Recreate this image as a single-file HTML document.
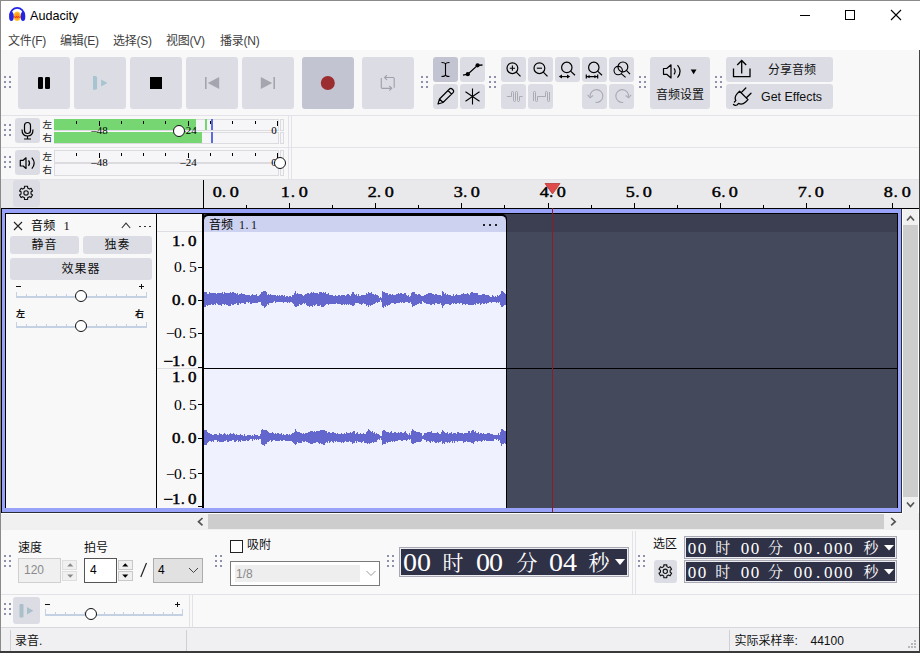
<!DOCTYPE html>
<html><head><meta charset="utf-8"><title>Audacity</title>
<style>
html,body{margin:0;padding:0;background:#fff}
#w{position:relative;width:920px;height:653px;overflow:hidden;background:#fff}
#w>div,#w>svg{position:absolute;display:block}
</style></head><body><div id="w">
<div style="left:0px;top:0px;width:920px;height:50px;background:#fff;"></div>
<svg style="left:0px;top:0px" width="30" height="30" viewBox="0 0 30 30"><defs><radialGradient id="lg" cx="50%" cy="50%" r="55%"><stop offset="0" stop-color="#ff8a1a"/><stop offset="0.55" stop-color="#ffa21f"/><stop offset="1" stop-color="#ffe14a"/></radialGradient></defs>
<ellipse cx="17.15" cy="16.3" rx="3.9" ry="4.8" fill="url(#lg)"/>
<path d="M13.3 16.9 L14.6 16.2 L15.6 17 L16.6 15.9 L17.6 17 L18.6 16 L19.6 16.9 L21 16.5 L21 17.3 L19.6 17.7 L18.6 17.1 L17.6 18 L16.6 17.2 L15.6 17.9 L14.6 17.2 L13.3 17.6 Z" fill="#e8241a"/>
<path d="M10.4 15.5 V14.6 A6.8 6.8 0 0 1 24 14.6 V15.5" fill="none" stroke="#2424e6" stroke-width="1.7"/>
<ellipse cx="11.4" cy="16.4" rx="2.3" ry="4.6" fill="#2424e6"/>
<ellipse cx="23" cy="16.4" rx="2.3" ry="4.6" fill="#2424e6"/></svg>
<div style="left:30px;top:10px;font:12.6px/1 'Liberation Sans','Noto Sans CJK SC',sans-serif;color:#000;white-space:pre;">Audacity</div>
<svg style="left:795px;top:5px" width="115" height="20" viewBox="0 0 115 20">
<path d="M5 10.5 H15" stroke="#000" stroke-width="1" fill="none"/>
<rect x="50.5" y="5.5" width="9" height="9" stroke="#000" stroke-width="1" fill="none"/>
<path d="M96 5 L106 15 M106 5 L96 15" stroke="#000" stroke-width="1.1" fill="none"/>
</svg>
<div style="left:8px;top:35.4px;font:12px/1 'Liberation Sans','Noto Sans CJK SC',sans-serif;color:#404040;white-space:pre;letter-spacing:-0.25px">文件(F)</div>
<div style="left:60px;top:35.4px;font:12px/1 'Liberation Sans','Noto Sans CJK SC',sans-serif;color:#404040;white-space:pre;letter-spacing:-0.25px">编辑(E)</div>
<div style="left:113px;top:35.4px;font:12px/1 'Liberation Sans','Noto Sans CJK SC',sans-serif;color:#404040;white-space:pre;letter-spacing:-0.25px">选择(S)</div>
<div style="left:166px;top:35.4px;font:12px/1 'Liberation Sans','Noto Sans CJK SC',sans-serif;color:#404040;white-space:pre;letter-spacing:-0.25px">视图(V)</div>
<div style="left:220px;top:35.4px;font:12px/1 'Liberation Sans','Noto Sans CJK SC',sans-serif;color:#404040;white-space:pre;letter-spacing:-0.25px">播录(N)</div>
<div style="left:0px;top:49.5px;width:920px;height:131px;background:#f8f8f9;"></div>
<div style="left:0px;top:115px;width:920px;height:1px;background:#e2e2e8;"></div>
<svg style="left:4px;top:76px" width="7" height="12"><rect x="0" y="0" width="2" height="2" fill="#8e90ac"/><rect x="0" y="5" width="2" height="2" fill="#8e90ac"/><rect x="0" y="10" width="2" height="2" fill="#8e90ac"/><rect x="5" y="0" width="2" height="2" fill="#8e90ac"/><rect x="5" y="5" width="2" height="2" fill="#8e90ac"/><rect x="5" y="10" width="2" height="2" fill="#8e90ac"/></svg>
<div style="left:18px;top:57px;width:52px;height:52px;background:#dcdde4;border-radius:3px"></div>
<div style="left:74px;top:57px;width:52px;height:52px;background:#dcdde4;border-radius:3px"></div>
<div style="left:130px;top:57px;width:52px;height:52px;background:#dcdde4;border-radius:3px"></div>
<div style="left:186px;top:57px;width:52px;height:52px;background:#dcdde4;border-radius:3px"></div>
<div style="left:242px;top:57px;width:52px;height:52px;background:#dcdde4;border-radius:3px"></div>
<div style="left:362px;top:57px;width:52px;height:52px;background:#dcdde4;border-radius:3px"></div>
<div style="left:302px;top:57px;width:52px;height:52px;background:#c3c4d1;border-radius:3px"></div>
<svg style="left:18px;top:57px" width="52" height="52" viewBox="0 0 52 52"><rect x="20" y="20" width="5" height="12" rx="1.2" fill="#000"/><rect x="27" y="20" width="5" height="12" rx="1.2" fill="#000"/></svg>
<svg style="left:74px;top:57px" width="52" height="52" viewBox="0 0 52 52"><path d="M19 19 H21.5 L23.1 19.9 V31.9 L21.5 32.8 H19 Z" fill="#a8c4d0"/><path d="M27.1 22.4 L33.4 26 L27.1 29.6 Z" fill="#a8c4d0"/></svg>
<svg style="left:130px;top:57px" width="52" height="52" viewBox="0 0 52 52"><rect x="20" y="20" width="12" height="12" fill="#000"/></svg>
<svg style="left:186px;top:57px" width="52" height="52" viewBox="0 0 52 52"><rect x="19" y="20" width="1.6" height="12" fill="#a4a5ae"/><path d="M33.2 20 V32 L21.8 26 Z" fill="#a4a5ae"/></svg>
<svg style="left:242px;top:57px" width="52" height="52" viewBox="0 0 52 52"><rect x="31.4" y="20" width="1.6" height="12" fill="#a4a5ae"/><path d="M18.8 20 V32 L30.2 26 Z" fill="#a4a5ae"/></svg>
<svg style="left:302px;top:57px" width="52" height="52" viewBox="0 0 52 52"><circle cx="25.8" cy="26" r="7" fill="#9b2d30"/></svg>
<svg style="left:362px;top:57px" width="52" height="52" viewBox="0 0 52 52"><g fill="none" stroke="#9fa1ad" stroke-width="1.15">
<path d="M32.2 30.7 V21.5 Q32.2 20.5 31.2 20.5 H22.8"/><path d="M24.9 18.2 L22.6 20.5 L24.9 22.8"/>
<path d="M19.3 21.1 V30.3 Q19.3 31.3 20.3 31.3 H29.5"/><path d="M27.3 29 L29.7 31.3 L27.3 33.6"/>
</g></svg>
<svg style="left:421px;top:76px" width="7" height="12"><rect x="0" y="0" width="2" height="2" fill="#8e90ac"/><rect x="0" y="5" width="2" height="2" fill="#8e90ac"/><rect x="0" y="10" width="2" height="2" fill="#8e90ac"/><rect x="5" y="0" width="2" height="2" fill="#8e90ac"/><rect x="5" y="5" width="2" height="2" fill="#8e90ac"/><rect x="5" y="10" width="2" height="2" fill="#8e90ac"/></svg>
<div style="left:433px;top:57px;width:25px;height:25px;background:#c3c4d1;border-radius:3px"></div>
<div style="left:460px;top:57px;width:25px;height:25px;background:#dcdde4;border-radius:3px"></div>
<div style="left:433px;top:84px;width:25px;height:25px;background:#dcdde4;border-radius:3px"></div>
<div style="left:460px;top:84px;width:25px;height:25px;background:#dcdde4;border-radius:3px"></div>
<svg style="left:433px;top:57px" width="25" height="25" viewBox="0 0 25 25"><path d="M8.5 5.5 C10.5 5.5 12.5 6 12.5 7.5 V17.5 C12.5 19 10.5 19.5 8.5 19.5 M16.5 5.5 C14.5 5.5 12.5 6 12.5 7.5 M12.5 17.5 C12.5 19 14.5 19.5 16.5 19.5" fill="none" stroke="#000" stroke-width="1.1"/></svg>
<svg style="left:460px;top:57px" width="25" height="25" viewBox="0 0 25 25"><path d="M3 18.2 L7.8 17.2 L17.6 8.3 L22.5 8" fill="none" stroke="#000" stroke-width="1.3"/><circle cx="7.8" cy="17.2" r="2.1" fill="#000"/><circle cx="17.6" cy="8.3" r="2.1" fill="#000"/></svg>
<svg style="left:433px;top:84px" width="25" height="25" viewBox="0 0 25 25"><path d="M5 20 L6.5 15 L16.5 5 a1.8 1.8 0 0 1 2.6 0 l1 1 a1.8 1.8 0 0 1 0 2.6 L10 18.5 Z M15 6.5 L18.6 10.1 M6.5 15 L10 18.5" fill="none" stroke="#000" stroke-width="1.2" stroke-linejoin="round"/></svg>
<svg style="left:460px;top:84px" width="25" height="25" viewBox="0 0 25 25"><path d="M12.5 4.5 V20.5 M5.5 7.8 L19.5 17.2 M19.5 7.8 L5.5 17.2" stroke="#000" stroke-width="1.1" fill="none"/></svg>
<svg style="left:489px;top:76px" width="7" height="12"><rect x="0" y="0" width="2" height="2" fill="#8e90ac"/><rect x="0" y="5" width="2" height="2" fill="#8e90ac"/><rect x="0" y="10" width="2" height="2" fill="#8e90ac"/><rect x="5" y="0" width="2" height="2" fill="#8e90ac"/><rect x="5" y="5" width="2" height="2" fill="#8e90ac"/><rect x="5" y="10" width="2" height="2" fill="#8e90ac"/></svg>
<div style="left:501px;top:57px;width:25px;height:25px;background:#dcdde4;border-radius:3px"></div>
<div style="left:528px;top:57px;width:25px;height:25px;background:#dcdde4;border-radius:3px"></div>
<div style="left:555px;top:57px;width:25px;height:25px;background:#dcdde4;border-radius:3px"></div>
<div style="left:582px;top:57px;width:25px;height:25px;background:#dcdde4;border-radius:3px"></div>
<div style="left:609px;top:57px;width:25px;height:25px;background:#dcdde4;border-radius:3px"></div>
<div style="left:501px;top:84px;width:25px;height:25px;background:#dcdde4;border-radius:3px"></div>
<div style="left:528px;top:84px;width:25px;height:25px;background:#dcdde4;border-radius:3px"></div>
<div style="left:582px;top:84px;width:25px;height:25px;background:#dcdde4;border-radius:3px"></div>
<div style="left:609px;top:84px;width:25px;height:25px;background:#dcdde4;border-radius:3px"></div>
<svg style="left:501px;top:57px" width="25" height="25" viewBox="0 0 25 25"><circle cx="11.4" cy="11.2" r="5.4" fill="none" stroke="#000" stroke-width="1.2"/><path d="M15.3 15.1 L19.5 19.4" stroke="#000" stroke-width="1.2"/><path d="M8.8 11.2 H14 M11.4 8.6 V13.8" stroke="#000" stroke-width="1.1"/></svg>
<svg style="left:528px;top:57px" width="25" height="25" viewBox="0 0 25 25"><circle cx="11.4" cy="11.2" r="5.4" fill="none" stroke="#000" stroke-width="1.2"/><path d="M15.3 15.1 L19.5 19.4" stroke="#000" stroke-width="1.2"/><path d="M8.8 11.2 H14" stroke="#000" stroke-width="1.1"/></svg>
<svg style="left:555px;top:57px" width="25" height="25" viewBox="0 0 25 25"><circle cx="11.8" cy="10.4" r="5.2" fill="none" stroke="#000" stroke-width="1.2"/><path d="M15.6 14.1 L20 18.3" stroke="#000" stroke-width="1.2"/><path d="M5 19.6 H14" stroke="#000" stroke-width="1.1" fill="none"/><path d="M3.8 19.6 L7 17.6 V21.6 Z M15.2 19.6 L12 17.6 V21.6 Z" fill="#000"/></svg>
<svg style="left:582px;top:57px" width="25" height="25" viewBox="0 0 25 25"><circle cx="11.8" cy="10.4" r="5.2" fill="none" stroke="#000" stroke-width="1.2"/><path d="M15.6 14.1 L20 18.3" stroke="#000" stroke-width="1.2"/><path d="M4.3 19.6 H15.7 M4.3 17.6 V21.6 M15.7 17.6 V21.6" stroke="#000" stroke-width="1.2" fill="none"/><path d="M5 19.6 L7.6 18 V21.2 Z M15 19.6 L12.4 18 V21.2 Z" fill="#000"/></svg>
<svg style="left:609px;top:57px" width="25" height="25" viewBox="0 0 25 25"><circle cx="9.2" cy="13.6" r="4.2" fill="none" stroke="#000" stroke-width="1.1"/><circle cx="13.9" cy="9.9" r="4.9" fill="none" stroke="#000" stroke-width="1.2"/><path d="M17.4 13.4 L21 17.2 M12.2 16.6 L16.6 20.4" stroke="#000" stroke-width="1.2"/></svg>
<svg style="left:501px;top:84px" width="25" height="25" viewBox="0 0 25 25"><path d="M5.9 12.5 H10.5 V8.5 a1 1 0 0 1 2 0 V16.5 a1 1 0 0 0 2 0 V8.5 a1 1 0 0 1 2 0 V16.5 a1 1 0 0 0 2 0 V12.5 H21.6" fill="none" stroke="#a9aab3" stroke-width="1"/></svg>
<svg style="left:528px;top:84px" width="25" height="25" viewBox="0 0 25 25"><path d="M5.5 17 V8.5 a1 1 0 0 1 2 0 V16.5 a1 1 0 0 0 2 0 V12.5 H17.5 V8.5 a1 1 0 0 1 2 0 V16.5 a1 1 0 0 0 2 0 V8" fill="none" stroke="#a9aab3" stroke-width="1"/></svg>
<svg style="left:582px;top:84px" width="25" height="25" viewBox="0 0 25 25"><path d="M8.1 12.8 A6.4 6.4 0 1 1 13.5 18.4" fill="none" stroke="#a9aab3" stroke-width="1.1"/><path d="M5.6 10.8 L8.1 13.8 L11 11.5" fill="none" stroke="#a9aab3" stroke-width="1.1"/></svg>
<svg style="left:609px;top:84px" width="25" height="25" viewBox="0 0 25 25"><path d="M19.6 12.8 A6.4 6.4 0 1 0 14.2 18.4" fill="none" stroke="#a9aab3" stroke-width="1.1"/><path d="M22.1 10.8 L19.6 13.8 L16.7 11.5" fill="none" stroke="#a9aab3" stroke-width="1.1"/></svg>
<svg style="left:639px;top:76px" width="7" height="12"><rect x="0" y="0" width="2" height="2" fill="#8e90ac"/><rect x="0" y="5" width="2" height="2" fill="#8e90ac"/><rect x="0" y="10" width="2" height="2" fill="#8e90ac"/><rect x="5" y="0" width="2" height="2" fill="#8e90ac"/><rect x="5" y="5" width="2" height="2" fill="#8e90ac"/><rect x="5" y="10" width="2" height="2" fill="#8e90ac"/></svg>
<div style="left:650px;top:57px;width:60px;height:52px;background:#dcdde4;border-radius:3px"></div>
<svg style="left:650px;top:57px" width="60" height="30" viewBox="0 0 60 30"><path d="M13.5 11.5 H16.7 L21 7.8 V21 L16.7 17.3 H13.5 Z" fill="none" stroke="#000" stroke-width="1.2" stroke-linejoin="round"/>
<path d="M24 11.4 Q26.3 14.4 24 17.4" fill="none" stroke="#000" stroke-width="1.2"/>
<path d="M27.5 8.2 Q32.8 14.4 27.5 20.6" fill="none" stroke="#000" stroke-width="1.2"/>
<path d="M40.7 12.6 H46.5 L43.6 17.2 Z" fill="#000"/></svg>
<div style="left:656px;top:89px;font:12px/1 'Liberation Sans','Noto Sans CJK SC',sans-serif;color:#111;white-space:pre;">音频设置</div>
<svg style="left:715px;top:76px" width="7" height="12"><rect x="0" y="0" width="2" height="2" fill="#8e90ac"/><rect x="0" y="5" width="2" height="2" fill="#8e90ac"/><rect x="0" y="10" width="2" height="2" fill="#8e90ac"/><rect x="5" y="0" width="2" height="2" fill="#8e90ac"/><rect x="5" y="5" width="2" height="2" fill="#8e90ac"/><rect x="5" y="10" width="2" height="2" fill="#8e90ac"/></svg>
<div style="left:726px;top:57px;width:106.6px;height:25px;background:#dcdde4;border-radius:3px"></div>
<div style="left:726px;top:84px;width:106.6px;height:25px;background:#dcdde4;border-radius:3px"></div>
<svg style="left:726px;top:57px" width="40" height="25" viewBox="0 0 40 25"><path d="M7.5 11.5 V19.6 H24 V11.5 M15.7 16.6 V4 M11.2 8 L15.7 3.5 L20.2 8" fill="none" stroke="#000" stroke-width="1.3"/></svg>
<div style="left:768px;top:64px;font:12px/1 'Liberation Sans','Noto Sans CJK SC',sans-serif;color:#111;white-space:pre;">分享音频</div>
<svg style="left:726px;top:84px" width="40" height="25" viewBox="0 0 40 25"><g fill="none" stroke="#000" stroke-width="1.3" stroke-linejoin="round" stroke-linecap="round">
<path d="M15.2 8.6 L19.8 4 M20.4 13.8 L25 9.2"/>
<path d="M13.6 7.2 L22 15.6 L19.6 18 Q16 21.2 12.6 19.4 L11 21 Q9 22 7.5 20.5 M13.6 7.2 L11.2 9.6 Q8 13.2 9.8 16.6 L8.4 18"/>
</g></svg>
<div style="left:761px;top:91px;font:12.4px/1 'Liberation Sans','Noto Sans CJK SC',sans-serif;color:#111;white-space:pre;">Get Effects</div>
<div style="left:0px;top:147px;width:920px;height:1px;background:#e2e2e8;"></div>
<div style="left:0px;top:179px;width:920px;height:1px;background:#e2e2e8;"></div>
<div style="left:288px;top:116px;width:1px;height:63px;background:#e2e2e8;"></div>
<div style="left:291px;top:116px;width:1px;height:63px;background:#e2e2e8;"></div>
<svg style="left:4px;top:124px" width="7" height="12"><rect x="0" y="0" width="2" height="2" fill="#8e90ac"/><rect x="0" y="5" width="2" height="2" fill="#8e90ac"/><rect x="0" y="10" width="2" height="2" fill="#8e90ac"/><rect x="5" y="0" width="2" height="2" fill="#8e90ac"/><rect x="5" y="5" width="2" height="2" fill="#8e90ac"/><rect x="5" y="10" width="2" height="2" fill="#8e90ac"/></svg>
<svg style="left:4px;top:156px" width="7" height="12"><rect x="0" y="0" width="2" height="2" fill="#8e90ac"/><rect x="0" y="5" width="2" height="2" fill="#8e90ac"/><rect x="0" y="10" width="2" height="2" fill="#8e90ac"/><rect x="5" y="0" width="2" height="2" fill="#8e90ac"/><rect x="5" y="5" width="2" height="2" fill="#8e90ac"/><rect x="5" y="10" width="2" height="2" fill="#8e90ac"/></svg>
<div style="left:15px;top:118px;width:25px;height:25px;background:#dcdde4;border-radius:3px"></div>
<div style="left:15px;top:150px;width:25px;height:25px;background:#dcdde4;border-radius:3px"></div>
<svg style="left:15px;top:118px" width="25" height="25" viewBox="0 0 25 25"><rect x="9.5" y="4.5" width="6" height="11" rx="3" fill="none" stroke="#000" stroke-width="1.2"/>
<path d="M7 11.5 Q7 18 12.5 18 Q18 18 18 11.5 M12.5 18 V21 M9 21 H16" fill="none" stroke="#000" stroke-width="1.2"/></svg>
<svg style="left:15px;top:150px" width="25" height="25" viewBox="0 0 25 25"><path d="M5.3 10.3 H8.2 L11 7.8 V18.5 L8.2 16 H5.3 Z" fill="none" stroke="#000" stroke-width="1.2" stroke-linejoin="round"/>
<path d="M13.5 10.3 Q15.6 13.1 13.5 15.9" fill="none" stroke="#000" stroke-width="1.2"/>
<path d="M16.8 7.6 Q21.6 13.1 16.8 18.6" fill="none" stroke="#000" stroke-width="1.2"/></svg>
<div style="left:42.5px;top:120px;font:9.5px/1 'Liberation Sans','Noto Sans CJK SC',sans-serif;color:#222;white-space:pre;">左</div>
<div style="left:42.5px;top:133px;font:9.5px/1 'Liberation Sans','Noto Sans CJK SC',sans-serif;color:#222;white-space:pre;">右</div>
<div style="left:42.5px;top:152px;font:9.5px/1 'Liberation Sans','Noto Sans CJK SC',sans-serif;color:#222;white-space:pre;">左</div>
<div style="left:42.5px;top:165px;font:9.5px/1 'Liberation Sans','Noto Sans CJK SC',sans-serif;color:#222;white-space:pre;">右</div>
<div style="left:54px;top:119px;width:225px;height:12px;background:#f6f6f8;box-shadow:inset 0 0 0 1px #dcdce0"></div>
<div style="left:280px;top:119px;width:4px;height:12px;background:#f6f6f8;box-shadow:inset 0 0 0 1px #dcdce0"></div>
<div style="left:54px;top:132px;width:225px;height:12px;background:#f6f6f8;box-shadow:inset 0 0 0 1px #dcdce0"></div>
<div style="left:280px;top:132px;width:4px;height:12px;background:#f6f6f8;box-shadow:inset 0 0 0 1px #dcdce0"></div>
<div style="left:54px;top:150px;width:225px;height:12.5px;background:#f6f6f8;box-shadow:inset 0 0 0 1px #dcdce0"></div>
<div style="left:280px;top:150px;width:4px;height:12.5px;background:#f6f6f8;box-shadow:inset 0 0 0 1px #dcdce0"></div>
<div style="left:54px;top:163px;width:225px;height:12.5px;background:#f6f6f8;box-shadow:inset 0 0 0 1px #dcdce0"></div>
<div style="left:280px;top:163px;width:4px;height:12.5px;background:#f6f6f8;box-shadow:inset 0 0 0 1px #dcdce0"></div>
<div style="left:54px;top:119px;width:142px;height:11px;background:#76d672;"></div>
<div style="left:54px;top:132px;width:148px;height:11px;background:#76d672;"></div>
<div style="left:205px;top:119px;width:2px;height:11px;background:#76d672;"></div>
<div style="left:210.5px;top:119px;width:2px;height:11px;background:#5b6be0;"></div>
<div style="left:210.5px;top:132px;width:2px;height:11px;background:#5b6be0;"></div>
<div style="left:76px;top:121px;width:1px;height:2.5px;background:#000;"></div>
<div style="left:99px;top:121px;width:1px;height:5px;background:#000;"></div>
<div style="left:121px;top:121px;width:1px;height:2.5px;background:#000;"></div>
<div style="left:143px;top:121px;width:1px;height:2.5px;background:#000;"></div>
<div style="left:165px;top:121px;width:1px;height:2.5px;background:#000;"></div>
<div style="left:188px;top:121px;width:1px;height:5px;background:#000;"></div>
<div style="left:210px;top:121px;width:1px;height:2.5px;background:#000;"></div>
<div style="left:232px;top:121px;width:1px;height:2.5px;background:#000;"></div>
<div style="left:255px;top:121px;width:1px;height:2.5px;background:#000;"></div>
<div style="left:277px;top:121px;width:1px;height:5px;background:#000;"></div>
<div style="left:79.5px;top:125px;width:40px;text-align:center;font:11px/1 'Liberation Serif','Noto Serif CJK SC',serif;color:#000">–48</div>
<div style="left:168.5px;top:125px;width:40px;text-align:center;font:11px/1 'Liberation Serif','Noto Serif CJK SC',serif;color:#000">–24</div>
<div style="left:254px;top:125px;width:40px;text-align:center;font:11px/1 'Liberation Serif','Noto Serif CJK SC',serif;color:#000">0</div>
<div style="left:76px;top:153px;width:1px;height:2.5px;background:#000;"></div>
<div style="left:99px;top:153px;width:1px;height:5px;background:#000;"></div>
<div style="left:121px;top:153px;width:1px;height:2.5px;background:#000;"></div>
<div style="left:143px;top:153px;width:1px;height:2.5px;background:#000;"></div>
<div style="left:165px;top:153px;width:1px;height:2.5px;background:#000;"></div>
<div style="left:188px;top:153px;width:1px;height:5px;background:#000;"></div>
<div style="left:210px;top:153px;width:1px;height:2.5px;background:#000;"></div>
<div style="left:232px;top:153px;width:1px;height:2.5px;background:#000;"></div>
<div style="left:255px;top:153px;width:1px;height:2.5px;background:#000;"></div>
<div style="left:277px;top:153px;width:1px;height:5px;background:#000;"></div>
<div style="left:79.5px;top:157px;width:40px;text-align:center;font:11px/1 'Liberation Serif','Noto Serif CJK SC',serif;color:#000">–48</div>
<div style="left:168.5px;top:157px;width:40px;text-align:center;font:11px/1 'Liberation Serif','Noto Serif CJK SC',serif;color:#000">–24</div>
<div style="left:254px;top:157px;width:40px;text-align:center;font:11px/1 'Liberation Serif','Noto Serif CJK SC',serif;color:#000">0</div>
<div style="left:172.7px;top:124.80000000000001px;width:12px;height:12px;border-radius:50%;background:#fff;box-sizing:border-box;border:1.3px solid #111"></div>
<div style="left:273.6px;top:156.8px;width:12px;height:12px;border-radius:50%;background:#fff;box-sizing:border-box;border:1.3px solid #111"></div>
<div style="left:0px;top:180px;width:920px;height:28px;background:#e9e9eb;"></div>
<div style="left:13px;top:180px;width:27px;height:27px;background:#dcdde4;border-radius:3px"></div>
<svg style="left:13px;top:180px" width="27" height="27" viewBox="0 0 27 27"><g transform="translate(13.05,12.9)"><g fill="none" stroke="#111" stroke-width="1.15" stroke-linejoin="round"><path d="M-1.58 -4.85 L-1.55 -6.62 L1.55 -6.62 L1.58 -4.85 L3.41 -3.79 L4.96 -4.65 L6.51 -1.97 L4.99 -1.06 L4.99 1.06 L6.51 1.97 L4.96 4.65 L3.41 3.79 L1.58 4.85 L1.55 6.62 L-1.55 6.62 L-1.58 4.85 L-3.41 3.79 L-4.96 4.65 L-6.51 1.97 L-4.99 1.06 L-4.99 -1.06 L-6.51 -1.97 L-4.96 -4.65 L-3.41 -3.79 Z"/><circle cx="0" cy="0" r="2.2"/></g></g></svg>
<div style="left:203px;top:180px;width:1px;height:28px;background:#000;"></div>
<div style="left:203px;top:203px;width:1px;height:5px;background:#000;"></div>
<div style="left:212.60px;top:184px;width:25.80px;height:15.5px;font:15.5px/1 'Liberation Serif','Noto Serif CJK SC',serif;color:#000;-webkit-text-stroke:0.45px #000;"><span style="position:absolute;left:0.00px;top:0;width:8.6px;text-align:center;transform:scaleX(1.17)">0</span><span style="position:absolute;left:9.46px;top:0">.</span><span style="position:absolute;left:17.20px;top:0;width:8.6px;text-align:center;transform:scaleX(1.17)">0</span></div>
<div style="left:246px;top:205px;width:1px;height:3px;background:#000;"></div>
<div style="left:289px;top:203px;width:1px;height:5px;background:#000;"></div>
<div style="left:281.43px;top:184px;width:25.80px;height:15.5px;font:15.5px/1 'Liberation Serif','Noto Serif CJK SC',serif;color:#000;-webkit-text-stroke:0.45px #000;"><span style="position:absolute;left:0.00px;top:0;width:8.6px;text-align:center;transform:scaleX(1.17)">1</span><span style="position:absolute;left:9.46px;top:0">.</span><span style="position:absolute;left:17.20px;top:0;width:8.6px;text-align:center;transform:scaleX(1.17)">0</span></div>
<div style="left:332px;top:205px;width:1px;height:3px;background:#000;"></div>
<div style="left:375px;top:203px;width:1px;height:5px;background:#000;"></div>
<div style="left:367.57px;top:184px;width:25.80px;height:15.5px;font:15.5px/1 'Liberation Serif','Noto Serif CJK SC',serif;color:#000;-webkit-text-stroke:0.45px #000;"><span style="position:absolute;left:0.00px;top:0;width:8.6px;text-align:center;transform:scaleX(1.17)">2</span><span style="position:absolute;left:9.46px;top:0">.</span><span style="position:absolute;left:17.20px;top:0;width:8.6px;text-align:center;transform:scaleX(1.17)">0</span></div>
<div style="left:418px;top:205px;width:1px;height:3px;background:#000;"></div>
<div style="left:461px;top:203px;width:1px;height:5px;background:#000;"></div>
<div style="left:453.70px;top:184px;width:25.80px;height:15.5px;font:15.5px/1 'Liberation Serif','Noto Serif CJK SC',serif;color:#000;-webkit-text-stroke:0.45px #000;"><span style="position:absolute;left:0.00px;top:0;width:8.6px;text-align:center;transform:scaleX(1.17)">3</span><span style="position:absolute;left:9.46px;top:0">.</span><span style="position:absolute;left:17.20px;top:0;width:8.6px;text-align:center;transform:scaleX(1.17)">0</span></div>
<div style="left:504px;top:205px;width:1px;height:3px;background:#000;"></div>
<div style="left:548px;top:203px;width:1px;height:5px;background:#000;"></div>
<div style="left:539.83px;top:184px;width:25.80px;height:15.5px;font:15.5px/1 'Liberation Serif','Noto Serif CJK SC',serif;color:#000;-webkit-text-stroke:0.45px #000;"><span style="position:absolute;left:0.00px;top:0;width:8.6px;text-align:center;transform:scaleX(1.17)">4</span><span style="position:absolute;left:9.46px;top:0">.</span><span style="position:absolute;left:17.20px;top:0;width:8.6px;text-align:center;transform:scaleX(1.17)">0</span></div>
<div style="left:591px;top:205px;width:1px;height:3px;background:#000;"></div>
<div style="left:634px;top:203px;width:1px;height:5px;background:#000;"></div>
<div style="left:625.96px;top:184px;width:25.80px;height:15.5px;font:15.5px/1 'Liberation Serif','Noto Serif CJK SC',serif;color:#000;-webkit-text-stroke:0.45px #000;"><span style="position:absolute;left:0.00px;top:0;width:8.6px;text-align:center;transform:scaleX(1.17)">5</span><span style="position:absolute;left:9.46px;top:0">.</span><span style="position:absolute;left:17.20px;top:0;width:8.6px;text-align:center;transform:scaleX(1.17)">0</span></div>
<div style="left:677px;top:205px;width:1px;height:3px;background:#000;"></div>
<div style="left:720px;top:203px;width:1px;height:5px;background:#000;"></div>
<div style="left:712.10px;top:184px;width:25.80px;height:15.5px;font:15.5px/1 'Liberation Serif','Noto Serif CJK SC',serif;color:#000;-webkit-text-stroke:0.45px #000;"><span style="position:absolute;left:0.00px;top:0;width:8.6px;text-align:center;transform:scaleX(1.17)">6</span><span style="position:absolute;left:9.46px;top:0">.</span><span style="position:absolute;left:17.20px;top:0;width:8.6px;text-align:center;transform:scaleX(1.17)">0</span></div>
<div style="left:763px;top:205px;width:1px;height:3px;background:#000;"></div>
<div style="left:806px;top:203px;width:1px;height:5px;background:#000;"></div>
<div style="left:798.23px;top:184px;width:25.80px;height:15.5px;font:15.5px/1 'Liberation Serif','Noto Serif CJK SC',serif;color:#000;-webkit-text-stroke:0.45px #000;"><span style="position:absolute;left:0.00px;top:0;width:8.6px;text-align:center;transform:scaleX(1.17)">7</span><span style="position:absolute;left:9.46px;top:0">.</span><span style="position:absolute;left:17.20px;top:0;width:8.6px;text-align:center;transform:scaleX(1.17)">0</span></div>
<div style="left:849px;top:205px;width:1px;height:3px;background:#000;"></div>
<div style="left:892px;top:203px;width:1px;height:5px;background:#000;"></div>
<div style="left:884.36px;top:184px;width:25.80px;height:15.5px;font:15.5px/1 'Liberation Serif','Noto Serif CJK SC',serif;color:#000;-webkit-text-stroke:0.45px #000;"><span style="position:absolute;left:0.00px;top:0;width:8.6px;text-align:center;transform:scaleX(1.17)">8</span><span style="position:absolute;left:9.46px;top:0">.</span><span style="position:absolute;left:17.20px;top:0;width:8.6px;text-align:center;transform:scaleX(1.17)">0</span></div>
<div style="left:1px;top:207.9px;width:918px;height:1.25px;background:#000;"></div>
<div style="left:1px;top:208px;width:1px;height:305px;background:#000;"></div>
<div style="left:2px;top:209px;width:900px;height:304px;background:#97a2f8;"></div>
<div style="left:5px;top:213px;width:893px;height:295px;background:#000;"></div>
<div style="left:6px;top:214px;width:150px;height:294px;background:#f8f8f9;"></div>
<div style="left:157px;top:214px;width:45px;height:294px;background:#f8f8f9;"></div>
<div style="left:157px;top:231px;width:45px;height:1px;background:#dddde2;"></div>
<div style="left:157px;top:368px;width:45px;height:1px;background:#dddde2;"></div>
<div style="left:204px;top:214px;width:693px;height:18px;background:#3c3e51;"></div>
<div style="left:204px;top:232px;width:693px;height:276px;background:#45495c;"></div>
<div style="left:203px;top:214.4px;width:304px;height:294px;background:#000;border-radius:5px 5px 0 0"></div>
<div style="left:204px;top:215.5px;width:302px;height:16.5px;background:#ccd2ef;border-radius:4.5px 4.5px 0 0"></div>
<div style="left:204px;top:232px;width:302px;height:136px;background:#eff1fe;"></div>
<div style="left:204px;top:369px;width:302px;height:139px;background:#eff1fe;"></div>
<div style="left:204px;top:368px;width:693px;height:1px;background:#000;"></div>
<div style="left:209px;top:218.7px;font:12px/1 'Liberation Sans','Noto Sans CJK SC',sans-serif;color:#000;white-space:pre;">音频</div>
<div style="left:239.00px;top:218.6px;width:18.00px;height:12px;font:12px/1 'Liberation Serif','Noto Serif CJK SC',serif;color:#111;"><span style="position:absolute;left:0.00px;top:0;width:6px;text-align:center;transform:scaleX(1.0)">1</span><span style="position:absolute;left:6.60px;top:0">.</span><span style="position:absolute;left:12.00px;top:0;width:6px;text-align:center;transform:scaleX(1.0)">1</span></div>
<div style="left:482.5px;top:223.5px;width:2px;height:2px;background:#222;"></div>
<div style="left:488.5px;top:223.5px;width:2px;height:2px;background:#222;"></div>
<div style="left:494.5px;top:223.5px;width:2px;height:2px;background:#222;"></div>
<svg style="left:0;top:0" width="920" height="653" shape-rendering="crispEdges"><polygon points="204,292 205,292 205,292 206,292 206,292 207,292 207,294 208,294 208,294 209,294 209,292 210,292 210,293 211,293 211,293 212,293 212,293 213,293 213,293 214,293 214,293 215,293 215,293 216,293 216,294 217,294 217,293 218,293 218,293 219,293 219,293 220,293 220,293 221,293 221,293 222,293 222,292 223,292 223,294 224,294 224,292 225,292 225,293 226,293 226,293 227,293 227,293 228,293 228,293 229,293 229,293 230,293 230,292 231,292 231,293 232,293 232,292 233,292 233,292 234,292 234,293 235,293 235,293 236,293 236,294 237,294 237,293 238,293 238,295 239,295 239,294 240,294 240,294 241,294 241,293 242,293 242,294 243,294 243,294 244,294 244,294 245,294 245,295 246,295 246,295 247,295 247,295 248,295 248,295 249,295 249,295 250,295 250,296 251,296 251,295 252,295 252,294 253,294 253,295 254,295 254,295 255,295 255,295 256,295 256,294 257,294 257,296 258,296 258,296 259,296 259,295 260,295 260,294 261,294 261,292 262,292 262,292 263,292 263,291 264,291 264,291 265,291 265,291 266,291 266,292 267,292 267,295 268,295 268,294 269,294 269,295 270,295 270,294 271,294 271,295 272,295 272,295 273,295 273,295 274,295 274,295 275,295 275,295 276,295 276,296 277,296 277,295 278,295 278,296 279,296 279,295 280,295 280,296 281,296 281,295 282,295 282,295 283,295 283,296 284,296 284,295 285,295 285,297 286,297 286,296 287,296 287,296 288,296 288,297 289,297 289,296 290,296 290,296 291,296 291,297 292,297 292,295 293,295 293,295 294,295 294,293 295,293 295,291 296,291 296,294 297,294 297,293 298,293 298,294 299,294 299,294 300,294 300,294 301,294 301,294 302,294 302,295 303,295 303,296 304,296 304,295 305,295 305,294 306,294 306,294 307,294 307,293 308,293 308,293 309,293 309,294 310,294 310,293 311,293 311,292 312,292 312,293 313,293 313,292 314,292 314,293 315,293 315,293 316,293 316,293 317,293 317,293 318,293 318,294 319,294 319,292 320,292 320,292 321,292 321,292 322,292 322,293 323,293 323,292 324,292 324,293 325,293 325,292 326,292 326,294 327,294 327,294 328,294 328,293 329,293 329,295 330,295 330,295 331,295 331,295 332,295 332,295 333,295 333,296 334,296 334,296 335,296 335,295 336,295 336,296 337,296 337,296 338,296 338,295 339,295 339,295 340,295 340,296 341,296 341,295 342,295 342,295 343,295 343,295 344,295 344,295 345,295 345,296 346,296 346,295 347,295 347,294 348,294 348,294 349,294 349,295 350,295 350,296 351,296 351,294 352,294 352,292 353,292 353,292 354,292 354,294 355,294 355,295 356,295 356,294 357,294 357,296 358,296 358,294 359,294 359,296 360,296 360,296 361,296 361,295 362,295 362,295 363,295 363,295 364,295 364,295 365,295 365,295 366,295 366,293 367,293 367,294 368,294 368,292 369,292 369,293 370,293 370,293 371,293 371,292 372,292 372,294 373,294 373,294 374,294 374,295 375,295 375,294 376,294 376,295 377,295 377,295 378,295 378,296 379,296 379,298 380,298 380,297 381,297 381,298 382,298 382,291 383,291 383,292 384,292 384,292 385,292 385,293 386,293 386,293 387,293 387,293 388,293 388,295 389,295 389,294 390,294 390,294 391,294 391,295 392,295 392,294 393,294 393,295 394,295 394,295 395,295 395,295 396,295 396,294 397,294 397,294 398,294 398,293 399,293 399,294 400,294 400,293 401,293 401,293 402,293 402,294 403,294 403,294 404,294 404,293 405,293 405,293 406,293 406,295 407,295 407,296 408,296 408,295 409,295 409,297 410,297 410,296 411,296 411,293 412,293 412,292 413,292 413,292 414,292 414,292 415,292 415,294 416,294 416,294 417,294 417,295 418,295 418,294 419,294 419,294 420,294 420,295 421,295 421,296 422,296 422,296 423,296 423,296 424,296 424,295 425,295 425,295 426,295 426,294 427,294 427,294 428,294 428,293 429,293 429,293 430,293 430,293 431,293 431,293 432,293 432,294 433,294 433,294 434,294 434,295 435,295 435,294 436,294 436,294 437,294 437,295 438,295 438,295 439,295 439,295 440,295 440,295 441,295 441,296 442,296 442,291 443,291 443,292 444,292 444,294 445,294 445,293 446,293 446,295 447,295 447,294 448,294 448,295 449,295 449,295 450,295 450,295 451,295 451,296 452,296 452,296 453,296 453,294 454,294 454,296 455,296 455,295 456,295 456,294 457,294 457,295 458,295 458,295 459,295 459,295 460,295 460,295 461,295 461,294 462,294 462,294 463,294 463,293 464,293 464,294 465,294 465,294 466,294 466,294 467,294 467,293 468,293 468,294 469,294 469,295 470,295 470,293 471,293 471,292 472,292 472,292 473,292 473,293 474,293 474,293 475,293 475,293 476,293 476,293 477,293 477,293 478,293 478,295 479,295 479,295 480,295 480,295 481,295 481,295 482,295 482,294 483,294 483,294 484,294 484,294 485,294 485,295 486,295 486,295 487,295 487,295 488,295 488,295 489,295 489,296 490,296 490,297 491,297 491,297 492,297 492,295 493,295 493,296 494,296 494,297 495,297 495,296 496,296 496,297 497,297 497,295 498,295 498,296 499,296 499,295 500,295 500,294 501,294 501,291 502,291 502,291 503,291 503,292 504,292 504,293 505,293 505,294 506,294 506,305 505,305 505,305 504,305 504,306 503,306 503,307 502,307 502,307 501,307 501,305 500,305 500,302 499,302 499,303 498,303 498,302 497,302 497,303 496,303 496,302 495,302 495,302 494,302 494,302 493,302 493,302 492,302 492,303 491,303 491,302 490,302 490,302 489,302 489,303 488,303 488,303 487,303 487,304 486,304 486,303 485,303 485,304 484,304 484,304 483,304 483,303 482,303 482,304 481,304 481,305 480,305 480,303 479,303 479,304 478,304 478,304 477,304 477,303 476,303 476,305 475,305 475,304 474,304 474,305 473,305 473,305 472,305 472,305 471,305 471,305 470,305 470,305 469,305 469,305 468,305 468,304 467,304 467,304 466,304 466,305 465,305 465,304 464,304 464,304 463,304 463,305 462,305 462,303 461,303 461,303 460,303 460,304 459,304 459,303 458,303 458,303 457,303 457,304 456,304 456,304 455,304 455,303 454,303 454,304 453,304 453,303 452,303 452,304 451,304 451,305 450,305 450,305 449,305 449,304 448,304 448,304 447,304 447,304 446,304 446,304 445,304 445,305 444,305 444,306 443,306 443,308 442,308 442,305 441,305 441,303 440,303 440,304 439,304 439,304 438,304 438,304 437,304 437,303 436,303 436,303 435,303 435,305 434,305 434,304 433,304 433,304 432,304 432,305 431,305 431,305 430,305 430,304 429,304 429,304 428,304 428,304 427,304 427,304 426,304 426,303 425,303 425,303 424,303 424,302 423,302 423,301 422,301 422,304 421,304 421,304 420,304 420,303 419,303 419,304 418,304 418,304 417,304 417,305 416,305 416,305 415,305 415,306 414,306 414,306 413,306 413,307 412,307 412,304 411,304 411,302 410,302 410,303 409,303 409,303 408,303 408,302 407,302 407,302 406,302 406,302 405,302 405,303 404,303 404,303 403,303 403,302 402,302 402,303 401,303 401,302 400,302 400,303 399,303 399,303 398,303 398,303 397,303 397,303 396,303 396,304 395,304 395,304 394,304 394,303 393,303 393,303 392,303 392,303 391,303 391,304 390,304 390,305 389,305 389,305 388,305 388,306 387,306 387,305 386,305 386,307 385,307 385,306 384,306 384,308 383,308 383,307 382,307 382,302 381,302 381,300 380,300 380,302 379,302 379,302 378,302 378,303 377,303 377,302 376,302 376,303 375,303 375,304 374,304 374,304 373,304 373,305 372,305 372,305 371,305 371,306 370,306 370,305 369,305 369,307 368,307 368,305 367,305 367,306 366,306 366,304 365,304 365,304 364,304 364,303 363,303 363,304 362,304 362,305 361,305 361,304 360,304 360,304 359,304 359,303 358,303 358,303 357,303 357,303 356,303 356,303 355,303 355,305 354,305 354,306 353,306 353,306 352,306 352,305 351,305 351,305 350,305 350,304 349,304 349,305 348,305 348,304 347,304 347,305 346,305 346,304 345,304 345,305 344,305 344,304 343,304 343,305 342,305 342,305 341,305 341,304 340,304 340,304 339,304 339,304 338,304 338,304 337,304 337,303 336,303 336,304 335,304 335,304 334,304 334,304 333,304 333,304 332,304 332,304 331,304 331,304 330,304 330,304 329,304 329,305 328,305 328,304 327,304 327,304 326,304 326,305 325,305 325,306 324,306 324,307 323,307 323,307 322,307 322,307 321,307 321,305 320,305 320,306 319,306 319,306 318,306 318,306 317,306 317,304 316,304 316,305 315,305 315,306 314,306 314,305 313,305 313,307 312,307 312,306 311,306 311,306 310,306 310,307 309,307 309,306 308,306 308,306 307,306 307,305 306,305 306,303 305,303 305,304 304,304 304,303 303,303 303,304 302,304 302,305 301,305 301,305 300,305 300,304 299,304 299,306 298,306 298,306 297,306 297,307 296,307 296,307 295,307 295,306 294,306 294,304 293,304 293,303 292,303 292,302 291,302 291,302 290,302 290,303 289,303 289,302 288,302 288,303 287,303 287,302 286,302 286,302 285,302 285,302 284,302 284,303 283,303 283,302 282,302 282,302 281,302 281,302 280,302 280,302 279,302 279,302 278,302 278,302 277,302 277,302 276,302 276,303 275,303 275,301 274,301 274,302 273,302 273,303 272,303 272,303 271,303 271,303 270,303 270,303 269,303 269,305 268,305 268,304 267,304 267,306 266,306 266,307 265,307 265,308 264,308 264,306 263,306 263,306 262,306 262,305 261,305 261,302 260,302 260,302 259,302 259,302 258,302 258,303 257,303 257,303 256,303 256,303 255,303 255,303 254,303 254,303 253,303 253,303 252,303 252,304 251,304 251,304 250,304 250,302 249,302 249,303 248,303 248,302 247,302 247,302 246,302 246,304 245,304 245,304 244,304 244,303 243,303 243,303 242,303 242,303 241,303 241,304 240,304 240,303 239,303 239,305 238,305 238,305 237,305 237,303 236,303 236,304 235,304 235,304 234,304 234,305 233,305 233,305 232,305 232,304 231,304 231,306 230,306 230,306 229,306 229,306 228,306 228,305 227,305 227,305 226,305 226,304 225,304 225,305 224,305 224,304 223,304 223,304 222,304 222,306 221,306 221,305 220,305 220,305 219,305 219,305 218,305 218,304 217,304 217,303 216,303 216,305 215,305 215,304 214,304 214,305 213,305 213,305 212,305 212,304 211,304 211,305 210,305 210,305 209,305 209,305 208,305 208,306 207,306 207,305 206,305 206,307 205,307 205,307 204,307" fill="#6266cd"/><polygon points="204,430 205,430 205,430 206,430 206,430 207,430 207,432 208,432 208,433 209,433 209,433 210,433 210,434 211,434 211,434 212,434 212,435 213,435 213,435 214,435 214,434 215,434 215,434 216,434 216,434 217,434 217,435 218,435 218,435 219,435 219,433 220,433 220,434 221,434 221,434 222,434 222,435 223,435 223,434 224,434 224,433 225,433 225,434 226,434 226,435 227,435 227,434 228,434 228,435 229,435 229,434 230,434 230,433 231,433 231,434 232,434 232,434 233,434 233,433 234,433 234,434 235,434 235,435 236,435 236,434 237,434 237,435 238,435 238,435 239,435 239,435 240,435 240,434 241,434 241,435 242,435 242,435 243,435 243,436 244,436 244,434 245,434 245,436 246,436 246,436 247,436 247,435 248,435 248,435 249,435 249,435 250,435 250,435 251,435 251,436 252,436 252,435 253,435 253,436 254,436 254,434 255,434 255,435 256,435 256,435 257,435 257,435 258,435 258,436 259,436 259,436 260,436 260,434 261,434 261,430 262,430 262,429 263,429 263,430 264,430 264,430 265,430 265,430 266,430 266,430 267,430 267,431 268,431 268,432 269,432 269,433 270,433 270,433 271,433 271,433 272,433 272,432 273,432 273,433 274,433 274,434 275,434 275,433 276,433 276,434 277,434 277,433 278,433 278,433 279,433 279,434 280,434 280,434 281,434 281,433 282,433 282,435 283,435 283,434 284,434 284,435 285,435 285,435 286,435 286,434 287,434 287,434 288,434 288,435 289,435 289,434 290,434 290,435 291,435 291,434 292,434 292,433 293,433 293,433 294,433 294,432 295,432 295,429 296,429 296,431 297,431 297,432 298,432 298,432 299,432 299,432 300,432 300,433 301,433 301,433 302,433 302,434 303,434 303,433 304,433 304,434 305,434 305,433 306,433 306,433 307,433 307,433 308,433 308,432 309,432 309,432 310,432 310,431 311,431 311,431 312,431 312,431 313,431 313,432 314,432 314,431 315,431 315,432 316,432 316,431 317,431 317,431 318,431 318,431 319,431 319,431 320,431 320,430 321,430 321,430 322,430 322,430 323,430 323,430 324,430 324,430 325,430 325,431 326,431 326,431 327,431 327,433 328,433 328,432 329,432 329,432 330,432 330,433 331,433 331,433 332,433 332,432 333,432 333,432 334,432 334,433 335,433 335,433 336,433 336,434 337,434 337,433 338,433 338,434 339,434 339,434 340,434 340,434 341,434 341,433 342,433 342,434 343,434 343,434 344,434 344,433 345,433 345,434 346,434 346,432 347,432 347,433 348,433 348,433 349,433 349,433 350,433 350,432 351,432 351,433 352,433 352,432 353,432 353,431 354,431 354,431 355,431 355,434 356,434 356,433 357,433 357,432 358,432 358,434 359,434 359,434 360,434 360,433 361,433 361,434 362,434 362,434 363,434 363,433 364,433 364,434 365,434 365,434 366,434 366,432 367,432 367,431 368,431 368,429 369,429 369,430 370,430 370,431 371,431 371,432 372,432 372,431 373,431 373,433 374,433 374,432 375,432 375,434 376,434 376,433 377,433 377,434 378,434 378,434 379,434 379,435 380,435 380,436 381,436 381,436 382,436 382,431 383,431 383,430 384,430 384,430 385,430 385,431 386,431 386,432 387,432 387,432 388,432 388,432 389,432 389,433 390,433 390,432 391,432 391,431 392,431 392,433 393,433 393,433 394,433 394,432 395,432 395,432 396,432 396,433 397,433 397,433 398,433 398,432 399,432 399,433 400,433 400,432 401,432 401,432 402,432 402,433 403,433 403,433 404,433 404,432 405,432 405,431 406,431 406,433 407,433 407,434 408,434 408,435 409,435 409,433 410,433 410,435 411,435 411,431 412,431 412,429 413,429 413,430 414,430 414,431 415,431 415,431 416,431 416,432 417,432 417,432 418,432 418,432 419,432 419,432 420,432 420,433 421,433 421,433 422,433 422,436 423,436 423,435 424,435 424,433 425,433 425,433 426,433 426,433 427,433 427,432 428,432 428,432 429,432 429,432 430,432 430,432 431,432 431,431 432,431 432,433 433,433 433,433 434,433 434,433 435,433 435,433 436,433 436,433 437,433 437,432 438,432 438,433 439,433 439,434 440,434 440,434 441,434 441,432 442,432 442,430 443,430 443,431 444,431 444,432 445,432 445,433 446,433 446,433 447,433 447,432 448,432 448,434 449,434 449,433 450,433 450,433 451,433 451,432 452,432 452,434 453,434 453,433 454,433 454,433 455,433 455,433 456,433 456,434 457,434 457,432 458,432 458,432 459,432 459,433 460,433 460,433 461,433 461,433 462,433 462,433 463,433 463,434 464,434 464,433 465,433 465,433 466,433 466,433 467,433 467,433 468,433 468,431 469,431 469,431 470,431 470,433 471,433 471,431 472,431 472,430 473,430 473,430 474,430 474,432 475,432 475,431 476,431 476,433 477,433 477,433 478,433 478,432 479,432 479,434 480,434 480,433 481,433 481,433 482,433 482,434 483,434 483,433 484,433 484,434 485,434 485,434 486,434 486,434 487,434 487,433 488,433 488,433 489,433 489,433 490,433 490,434 491,434 491,434 492,434 492,434 493,434 493,435 494,435 494,435 495,435 495,435 496,435 496,435 497,435 497,435 498,435 498,433 499,433 499,435 500,435 500,432 501,432 501,429 502,429 502,429 503,429 503,430 504,430 504,431 505,431 505,431 506,431 506,444 505,444 505,443 504,443 504,444 503,444 503,444 502,444 502,446 501,446 501,443 500,443 500,440 499,440 499,441 498,441 498,439 497,439 497,440 496,440 496,439 495,439 495,439 494,439 494,441 493,441 493,441 492,441 492,441 491,441 491,441 490,441 490,441 489,441 489,441 488,441 488,441 487,441 487,441 486,441 486,440 485,440 485,441 484,441 484,440 483,440 483,441 482,441 482,442 481,442 481,441 480,441 480,441 479,441 479,441 478,441 478,442 477,442 477,441 476,441 476,441 475,441 475,442 474,442 474,444 473,444 473,443 472,443 472,443 471,443 471,442 470,442 470,442 469,442 469,442 468,442 468,442 467,442 467,441 466,441 466,442 465,442 465,442 464,442 464,443 463,443 463,441 462,441 462,441 461,441 461,441 460,441 460,441 459,441 459,441 458,441 458,442 457,442 457,441 456,441 456,441 455,441 455,443 454,443 454,441 453,441 453,443 452,443 452,441 451,441 451,442 450,442 450,443 449,443 449,442 448,442 448,443 447,443 447,442 446,442 446,442 445,442 445,444 444,444 444,443 443,443 443,444 442,444 442,441 441,441 441,442 440,442 440,442 439,442 439,443 438,443 438,442 437,442 437,443 436,443 436,443 435,443 435,442 434,442 434,441 433,441 433,442 432,442 432,441 431,441 431,443 430,443 430,442 429,442 429,441 428,441 428,441 427,441 427,442 426,442 426,440 425,440 425,440 424,440 424,439 423,439 423,439 422,439 422,441 421,441 421,442 420,442 420,442 419,442 419,442 418,442 418,442 417,442 417,442 416,442 416,443 415,443 415,443 414,443 414,444 413,444 413,444 412,444 412,443 411,443 411,439 410,439 410,440 409,440 409,439 408,439 408,440 407,440 407,441 406,441 406,440 405,440 405,440 404,440 404,440 403,440 403,441 402,441 402,441 401,441 401,440 400,440 400,440 399,440 399,440 398,440 398,441 397,441 397,441 396,441 396,441 395,441 395,442 394,442 394,441 393,441 393,442 392,442 392,441 391,441 391,442 390,442 390,442 389,442 389,442 388,442 388,443 387,443 387,442 386,442 386,444 385,444 385,444 384,444 384,444 383,444 383,445 382,445 382,440 381,440 381,438 380,438 380,440 379,440 379,439 378,439 378,440 377,440 377,442 376,442 376,442 375,442 375,442 374,442 374,443 373,443 373,442 372,442 372,443 371,443 371,443 370,443 370,444 369,444 369,443 368,443 368,444 367,444 367,443 366,443 366,443 365,443 365,443 364,443 364,441 363,441 363,442 362,442 362,443 361,443 361,442 360,442 360,442 359,442 359,442 358,442 358,441 357,441 357,443 356,443 356,441 355,441 355,443 354,443 354,443 353,443 353,444 352,444 352,442 351,442 351,442 350,442 350,441 349,441 349,442 348,442 348,442 347,442 347,442 346,442 346,441 345,441 345,442 344,442 344,443 343,443 343,442 342,442 342,443 341,443 341,442 340,442 340,442 339,442 339,442 338,442 338,442 337,442 337,441 336,441 336,442 335,442 335,441 334,441 334,443 333,443 333,442 332,442 332,441 331,441 331,442 330,442 330,443 329,443 329,441 328,441 328,443 327,443 327,442 326,442 326,443 325,443 325,445 324,445 324,445 323,445 323,444 322,444 322,444 321,444 321,443 320,443 320,444 319,444 319,443 318,443 318,442 317,442 317,442 316,442 316,443 315,443 315,443 314,443 314,443 313,443 313,444 312,444 312,444 311,444 311,444 310,444 310,443 309,443 309,443 308,443 308,442 307,442 307,442 306,442 306,441 305,441 305,442 304,442 304,442 303,442 303,441 302,441 302,443 301,443 301,443 300,443 300,443 299,443 299,443 298,443 298,442 297,442 297,444 296,444 296,445 295,445 295,444 294,444 294,443 293,443 293,442 292,442 292,441 291,441 291,441 290,441 290,441 289,441 289,441 288,441 288,441 287,441 287,441 286,441 286,441 285,441 285,440 284,440 284,440 283,440 283,441 282,441 282,441 281,441 281,440 280,440 280,441 279,441 279,441 278,441 278,441 277,441 277,441 276,441 276,441 275,441 275,440 274,440 274,440 273,440 273,441 272,441 272,442 271,442 271,440 270,440 270,441 269,441 269,442 268,442 268,442 267,442 267,444 266,444 266,444 265,444 265,446 264,446 264,445 263,445 263,445 262,445 262,444 261,444 261,439 260,439 260,439 259,439 259,440 258,440 258,439 257,439 257,440 256,440 256,439 255,439 255,440 254,440 254,439 253,439 253,441 252,441 252,439 251,439 251,439 250,439 250,440 249,440 249,441 248,441 248,441 247,441 247,440 246,440 246,441 245,441 245,441 244,441 244,441 243,441 243,441 242,441 242,440 241,440 241,442 240,442 240,441 239,441 239,442 238,442 238,440 237,440 237,441 236,441 236,442 235,442 235,442 234,442 234,440 233,440 233,440 232,440 232,441 231,441 231,441 230,441 230,441 229,441 229,442 228,442 228,442 227,442 227,440 226,440 226,441 225,441 225,441 224,441 224,442 223,442 223,442 222,442 222,442 221,442 221,442 220,442 220,442 219,442 219,441 218,441 218,442 217,442 217,440 216,440 216,440 215,440 215,440 214,440 214,442 213,442 213,441 212,441 212,442 211,442 211,441 210,441 210,441 209,441 209,442 208,442 208,443 207,443 207,445 206,445 206,445 205,445 205,445 204,445" fill="#6266cd"/></svg>
<div style="left:171.90px;top:233.5px;width:24.90px;height:14.5px;font:14.5px/1 'Liberation Serif','Noto Serif CJK SC',serif;color:#000;-webkit-text-stroke:0.45px #000;"><span style="position:absolute;left:0.00px;top:0;width:8.3px;text-align:center;transform:scaleX(1.17)">1</span><span style="position:absolute;left:9.13px;top:0">.</span><span style="position:absolute;left:16.60px;top:0;width:8.3px;text-align:center;transform:scaleX(1.17)">0</span></div>
<div style="left:173.70px;top:259.5px;width:23.10px;height:14.5px;font:14.5px/1 'Liberation Serif','Noto Serif CJK SC',serif;color:#000;"><span style="position:absolute;left:0.00px;top:0;width:7.7px;text-align:center;transform:scaleX(1.08)">0</span><span style="position:absolute;left:8.47px;top:0">.</span><span style="position:absolute;left:15.40px;top:0;width:7.7px;text-align:center;transform:scaleX(1.08)">5</span></div>
<div style="left:171.90px;top:293.2px;width:24.90px;height:14.5px;font:14.5px/1 'Liberation Serif','Noto Serif CJK SC',serif;color:#000;-webkit-text-stroke:0.45px #000;"><span style="position:absolute;left:0.00px;top:0;width:8.3px;text-align:center;transform:scaleX(1.17)">0</span><span style="position:absolute;left:9.13px;top:0">.</span><span style="position:absolute;left:16.60px;top:0;width:8.3px;text-align:center;transform:scaleX(1.17)">0</span></div>
<div style="left:166.00px;top:325.8px;width:30.80px;height:14.5px;font:14.5px/1 'Liberation Serif','Noto Serif CJK SC',serif;color:#000;"><span style="position:absolute;left:0.00px;top:0;width:7.7px;text-align:center;transform:scaleX(1.08)">−</span><span style="position:absolute;left:7.70px;top:0;width:7.7px;text-align:center;transform:scaleX(1.08)">0</span><span style="position:absolute;left:16.17px;top:0">.</span><span style="position:absolute;left:23.10px;top:0;width:7.7px;text-align:center;transform:scaleX(1.08)">5</span></div>
<div style="left:163.60px;top:353.5px;width:33.20px;height:14.5px;font:14.5px/1 'Liberation Serif','Noto Serif CJK SC',serif;color:#000;-webkit-text-stroke:0.45px #000;"><span style="position:absolute;left:0.00px;top:0;width:8.3px;text-align:center;transform:scaleX(1.17)">−</span><span style="position:absolute;left:8.30px;top:0;width:8.3px;text-align:center;transform:scaleX(1.17)">1</span><span style="position:absolute;left:17.43px;top:0">.</span><span style="position:absolute;left:24.90px;top:0;width:8.3px;text-align:center;transform:scaleX(1.17)">0</span></div>
<div style="left:171.90px;top:370.1px;width:24.90px;height:14.5px;font:14.5px/1 'Liberation Serif','Noto Serif CJK SC',serif;color:#000;-webkit-text-stroke:0.45px #000;"><span style="position:absolute;left:0.00px;top:0;width:8.3px;text-align:center;transform:scaleX(1.17)">1</span><span style="position:absolute;left:9.13px;top:0">.</span><span style="position:absolute;left:16.60px;top:0;width:8.3px;text-align:center;transform:scaleX(1.17)">0</span></div>
<div style="left:173.70px;top:397.7px;width:23.10px;height:14.5px;font:14.5px/1 'Liberation Serif','Noto Serif CJK SC',serif;color:#000;"><span style="position:absolute;left:0.00px;top:0;width:7.7px;text-align:center;transform:scaleX(1.08)">0</span><span style="position:absolute;left:8.47px;top:0">.</span><span style="position:absolute;left:15.40px;top:0;width:7.7px;text-align:center;transform:scaleX(1.08)">5</span></div>
<div style="left:171.90px;top:431.1px;width:24.90px;height:14.5px;font:14.5px/1 'Liberation Serif','Noto Serif CJK SC',serif;color:#000;-webkit-text-stroke:0.45px #000;"><span style="position:absolute;left:0.00px;top:0;width:8.3px;text-align:center;transform:scaleX(1.17)">0</span><span style="position:absolute;left:9.13px;top:0">.</span><span style="position:absolute;left:16.60px;top:0;width:8.3px;text-align:center;transform:scaleX(1.17)">0</span></div>
<div style="left:166.00px;top:466.7px;width:30.80px;height:14.5px;font:14.5px/1 'Liberation Serif','Noto Serif CJK SC',serif;color:#000;"><span style="position:absolute;left:0.00px;top:0;width:7.7px;text-align:center;transform:scaleX(1.08)">−</span><span style="position:absolute;left:7.70px;top:0;width:7.7px;text-align:center;transform:scaleX(1.08)">0</span><span style="position:absolute;left:16.17px;top:0">.</span><span style="position:absolute;left:23.10px;top:0;width:7.7px;text-align:center;transform:scaleX(1.08)">5</span></div>
<div style="left:163.60px;top:492.3px;width:33.20px;height:14.5px;font:14.5px/1 'Liberation Serif','Noto Serif CJK SC',serif;color:#000;-webkit-text-stroke:0.45px #000;"><span style="position:absolute;left:0.00px;top:0;width:8.3px;text-align:center;transform:scaleX(1.17)">−</span><span style="position:absolute;left:8.30px;top:0;width:8.3px;text-align:center;transform:scaleX(1.17)">1</span><span style="position:absolute;left:17.43px;top:0">.</span><span style="position:absolute;left:24.90px;top:0;width:8.3px;text-align:center;transform:scaleX(1.17)">0</span></div>
<div style="left:198px;top:267px;width:5px;height:1px;background:#000;"></div>
<div style="left:198px;top:300px;width:5px;height:1px;background:#000;"></div>
<div style="left:198px;top:333px;width:5px;height:1px;background:#000;"></div>
<div style="left:198px;top:367px;width:5px;height:1px;background:#000;"></div>
<div style="left:198px;top:404px;width:5px;height:1px;background:#000;"></div>
<div style="left:198px;top:438px;width:5px;height:1px;background:#000;"></div>
<div style="left:198px;top:473px;width:5px;height:1px;background:#000;"></div>
<div style="left:198px;top:506px;width:5px;height:1px;background:#000;"></div>
<div style="left:202px;top:214px;width:2px;height:294px;background:#000;"></div>
<div style="left:552px;top:208px;width:1px;height:305px;background:#8c1c2c;"></div>
<svg style="left:544px;top:183px" width="17" height="12" viewBox="0 0 17 12"><path d="M1 0.5 H16 L8.5 11 Z" fill="#e04a4a" stroke="#b23a3a" stroke-width="0.8"/></svg>
<svg style="left:13px;top:221px" width="10" height="10" viewBox="0 0 10 10"><path d="M1 1 L9 9 M9 1 L1 9" stroke="#222" stroke-width="1.1"/></svg>
<div style="left:31px;top:220px;font:12px/1 'Liberation Sans','Noto Sans CJK SC',sans-serif;color:#000;white-space:pre;letter-spacing:0.3px">音频</div>
<div style="left:63.5px;top:220.3px;font:12.5px/1 'Liberation Serif','Noto Serif CJK SC',serif;color:#111;white-space:pre;">1</div>
<svg style="left:121px;top:222px" width="10" height="7" viewBox="0 0 10 7"><path d="M0.8 6 L5 1.2 L9.2 6" fill="none" stroke="#333" stroke-width="1.1"/></svg>
<div style="left:139px;top:225.5px;width:2px;height:1.5px;background:#333;"></div>
<div style="left:144px;top:225.5px;width:2px;height:1.5px;background:#333;"></div>
<div style="left:149px;top:225.5px;width:2px;height:1.5px;background:#333;"></div>
<div style="left:10px;top:236px;width:69px;height:18px;background:#dcdde4;border-radius:3px"></div>
<div style="left:83px;top:236px;width:69px;height:18px;background:#dcdde4;border-radius:3px"></div>
<div style="left:10px;top:258px;width:142px;height:22px;background:#dcdde4;border-radius:3px"></div>
<div style="left:10px;top:239px;width:69px;text-align:center;font:12px/1 'Liberation Sans','Noto Sans CJK SC',sans-serif;color:#111;letter-spacing:1px">静音</div>
<div style="left:83px;top:239px;width:69px;text-align:center;font:12px/1 'Liberation Sans','Noto Sans CJK SC',sans-serif;color:#111;letter-spacing:1px">独奏</div>
<div style="left:10px;top:263px;width:142px;text-align:center;font:12px/1 'Liberation Sans','Noto Sans CJK SC',sans-serif;color:#111;letter-spacing:1px">效果器</div>
<div style="left:16px;top:296.2px;width:131px;height:2px;background:#c3d1e2;"></div>
<div style="left:16px;top:291.5px;width:1px;height:5px;background:#c3d1e2;"></div>
<div style="left:26px;top:294.0px;width:1px;height:2.5px;background:#c3d1e2;"></div>
<div style="left:36px;top:294.0px;width:1px;height:2.5px;background:#c3d1e2;"></div>
<div style="left:46px;top:294.0px;width:1px;height:2.5px;background:#c3d1e2;"></div>
<div style="left:56px;top:294.0px;width:1px;height:2.5px;background:#c3d1e2;"></div>
<div style="left:66px;top:294.0px;width:1px;height:2.5px;background:#c3d1e2;"></div>
<div style="left:76px;top:294.0px;width:1px;height:2.5px;background:#c3d1e2;"></div>
<div style="left:86px;top:294.0px;width:1px;height:2.5px;background:#c3d1e2;"></div>
<div style="left:96px;top:294.0px;width:1px;height:2.5px;background:#c3d1e2;"></div>
<div style="left:106px;top:294.0px;width:1px;height:2.5px;background:#c3d1e2;"></div>
<div style="left:116px;top:294.0px;width:1px;height:2.5px;background:#c3d1e2;"></div>
<div style="left:126px;top:294.0px;width:1px;height:2.5px;background:#c3d1e2;"></div>
<div style="left:136px;top:294.0px;width:1px;height:2.5px;background:#c3d1e2;"></div>
<div style="left:146px;top:291.5px;width:1px;height:5px;background:#c3d1e2;"></div>
<div style="left:74.9px;top:289.8px;width:12px;height:12px;border-radius:50%;background:#fff;box-sizing:border-box;border:1.3px solid #111"></div>
<div style="left:16px;top:326.2px;width:131px;height:2px;background:#c3d1e2;"></div>
<div style="left:16px;top:321.5px;width:1px;height:5px;background:#c3d1e2;"></div>
<div style="left:26px;top:324.0px;width:1px;height:2.5px;background:#c3d1e2;"></div>
<div style="left:36px;top:324.0px;width:1px;height:2.5px;background:#c3d1e2;"></div>
<div style="left:46px;top:324.0px;width:1px;height:2.5px;background:#c3d1e2;"></div>
<div style="left:56px;top:324.0px;width:1px;height:2.5px;background:#c3d1e2;"></div>
<div style="left:66px;top:324.0px;width:1px;height:2.5px;background:#c3d1e2;"></div>
<div style="left:76px;top:324.0px;width:1px;height:2.5px;background:#c3d1e2;"></div>
<div style="left:86px;top:324.0px;width:1px;height:2.5px;background:#c3d1e2;"></div>
<div style="left:96px;top:324.0px;width:1px;height:2.5px;background:#c3d1e2;"></div>
<div style="left:106px;top:324.0px;width:1px;height:2.5px;background:#c3d1e2;"></div>
<div style="left:116px;top:324.0px;width:1px;height:2.5px;background:#c3d1e2;"></div>
<div style="left:126px;top:324.0px;width:1px;height:2.5px;background:#c3d1e2;"></div>
<div style="left:136px;top:324.0px;width:1px;height:2.5px;background:#c3d1e2;"></div>
<div style="left:146px;top:321.5px;width:1px;height:5px;background:#c3d1e2;"></div>
<div style="left:74.9px;top:319.8px;width:12px;height:12px;border-radius:50%;background:#fff;box-sizing:border-box;border:1.3px solid #111"></div>
<div style="left:16px;top:286px;width:5px;height:1.3px;background:#111;"></div>
<div style="left:139px;top:286px;width:5px;height:1.3px;background:#111;"></div>
<div style="left:141px;top:284px;width:1.3px;height:5px;background:#111;"></div>
<div style="left:16px;top:310px;font:9px/1 'Liberation Sans','Noto Sans CJK SC',sans-serif;color:#111;white-space:pre;font-weight:bold">左</div>
<div style="left:135px;top:310px;font:9px/1 'Liberation Sans','Noto Sans CJK SC',sans-serif;color:#111;white-space:pre;font-weight:bold">右</div>
<div style="left:901px;top:209px;width:1px;height:304px;background:#2a2c3c;"></div>
<div style="left:2px;top:512px;width:900px;height:1px;background:#2a2c3c;"></div>
<div style="left:902px;top:209px;width:17px;height:321px;background:#f0f0f0;"></div>
<div style="left:902px;top:209px;width:1px;height:304px;background:#fff;"></div>
<div style="left:918px;top:209px;width:1px;height:304px;background:#fff;"></div>
<div style="left:903px;top:225px;width:15px;height:272px;background:#cdcdcd;"></div>
<svg style="left:902px;top:209px" width="17" height="16" viewBox="0 0 17 16"><path d="M5 11.5 L8.5 7.5 L12 11.5" fill="none" stroke="#555" stroke-width="1.7"/></svg>
<svg style="left:902px;top:497px" width="17" height="16" viewBox="0 0 17 16"><path d="M5 5.5 L8.5 9.5 L12 5.5" fill="none" stroke="#555" stroke-width="1.7"/></svg>
<div style="left:0px;top:513px;width:902px;height:17px;background:#f0f0f0;"></div>
<div style="left:0px;top:513px;width:902px;height:1px;background:#fff;"></div>
<div style="left:208px;top:514px;width:676px;height:15px;background:#cdcdcd;"></div>
<svg style="left:192px;top:513px" width="16" height="17" viewBox="0 0 16 17"><path d="M10.5 5 L6.5 8.7 L10.5 12.4" fill="none" stroke="#555" stroke-width="1.7"/></svg>
<svg style="left:885px;top:513px" width="16" height="17" viewBox="0 0 16 17"><path d="M6.2 5 L10.2 8.7 L6.2 12.4" fill="none" stroke="#555" stroke-width="1.7"/></svg>
<div style="left:0px;top:530px;width:920px;height:98px;background:#f9f9fa;"></div>
<div style="left:0px;top:594px;width:920px;height:1px;background:#e2e2e8;"></div>
<div style="left:0px;top:627px;width:920px;height:1px;background:#d8d8dc;"></div>
<svg style="left:4px;top:555px" width="7" height="12"><rect x="0" y="0" width="2" height="2" fill="#8e90ac"/><rect x="0" y="5" width="2" height="2" fill="#8e90ac"/><rect x="0" y="10" width="2" height="2" fill="#8e90ac"/><rect x="5" y="0" width="2" height="2" fill="#8e90ac"/><rect x="5" y="5" width="2" height="2" fill="#8e90ac"/><rect x="5" y="10" width="2" height="2" fill="#8e90ac"/></svg>
<div style="left:18px;top:542px;font:12px/1 'Liberation Sans','Noto Sans CJK SC',sans-serif;color:#111;white-space:pre;">速度</div>
<div style="left:84px;top:542px;font:12px/1 'Liberation Sans','Noto Sans CJK SC',sans-serif;color:#111;white-space:pre;">拍号</div>
<div style="left:18px;top:558px;width:43px;height:25px;background:#f0f0f0;box-sizing:border-box;border:1px solid #d0d0d0"></div>
<div style="left:24px;top:564px;font:12px/1 'Liberation Sans','Noto Sans CJK SC',sans-serif;color:#8a8a8a;white-space:pre;">120</div>
<div style="left:62px;top:559.5px;width:15px;height:10px;background:#f0f0f0;box-sizing:border-box;border:1px solid #dedede"></div>
<div style="left:62px;top:571px;width:15px;height:10px;background:#f0f0f0;box-sizing:border-box;border:1px solid #dedede"></div>
<svg style="left:62.5px;top:559.5px" width="14.5" height="10" viewBox="0 0 14.5 10"><path d="M4.2 6.5 L7.25 3.3 L10.3 6.5 Z" fill="#888"/></svg>
<svg style="left:62.5px;top:571px" width="14.5" height="10" viewBox="0 0 14.5 10"><path d="M4.2 3.5 L7.25 6.7 L10.3 3.5 Z" fill="#888"/></svg>
<div style="left:84px;top:558px;width:33px;height:25px;background:#fff;box-sizing:border-box;border:1px solid #555"></div>
<div style="left:90px;top:564px;font:12px/1 'Liberation Sans','Noto Sans CJK SC',sans-serif;color:#000;white-space:pre;">4</div>
<div style="left:118px;top:559.5px;width:14.5px;height:10px;background:#f0f0f0;box-sizing:border-box;border:1px solid #c8c8c8"></div>
<div style="left:118px;top:571px;width:14.5px;height:10px;background:#f0f0f0;box-sizing:border-box;border:1px solid #c8c8c8"></div>
<svg style="left:118px;top:559.5px" width="14.5" height="10" viewBox="0 0 14.5 10"><path d="M4.2 6.5 L7.25 3.3 L10.3 6.5 Z" fill="#000"/></svg>
<svg style="left:118px;top:571px" width="14.5" height="10" viewBox="0 0 14.5 10"><path d="M4.2 3.5 L7.25 6.7 L10.3 3.5 Z" fill="#000"/></svg>
<svg style="left:139px;top:561px" width="10" height="18" viewBox="0 0 10 18"><path d="M7.5 2 L1.8 16" stroke="#222" stroke-width="1.2"/></svg>
<div style="left:153px;top:558px;width:50px;height:25px;background:#e1e1e1;box-sizing:border-box;border:1px solid #adadad"></div>
<div style="left:158px;top:564px;font:12px/1 'Liberation Sans','Noto Sans CJK SC',sans-serif;color:#000;white-space:pre;">4</div>
<svg style="left:188px;top:567px" width="11" height="7" viewBox="0 0 11 7"><path d="M1 1 L5.5 5.5 L10 1" fill="none" stroke="#444" stroke-width="1"/></svg>
<svg style="left:215px;top:555px" width="7" height="12"><rect x="0" y="0" width="2" height="2" fill="#8e90ac"/><rect x="0" y="5" width="2" height="2" fill="#8e90ac"/><rect x="0" y="10" width="2" height="2" fill="#8e90ac"/><rect x="5" y="0" width="2" height="2" fill="#8e90ac"/><rect x="5" y="5" width="2" height="2" fill="#8e90ac"/><rect x="5" y="10" width="2" height="2" fill="#8e90ac"/></svg>
<div style="left:230px;top:540px;width:13px;height:13px;background:#fff;box-sizing:border-box;border:1px solid #222"></div>
<div style="left:247px;top:539px;font:12px/1 'Liberation Sans','Noto Sans CJK SC',sans-serif;color:#111;white-space:pre;">吸附</div>
<div style="left:230px;top:561px;width:150px;height:25px;background:#fff;box-sizing:border-box;border:1px solid #7a7a7a"></div>
<div style="left:235px;top:565px;width:125px;height:17px;background:#eeeeee;"></div>
<div style="left:236px;top:568px;font:12px/1 'Liberation Sans','Noto Sans CJK SC',sans-serif;color:#8a8a8a;white-space:pre;">1/8</div>
<svg style="left:366px;top:570px" width="10" height="7" viewBox="0 0 10 7"><path d="M0.5 1 L5 5.5 L9.5 1" fill="none" stroke="#999" stroke-width="1"/></svg>
<svg style="left:387px;top:555px" width="7" height="12"><rect x="0" y="0" width="2" height="2" fill="#8e90ac"/><rect x="0" y="5" width="2" height="2" fill="#8e90ac"/><rect x="0" y="10" width="2" height="2" fill="#8e90ac"/><rect x="5" y="0" width="2" height="2" fill="#8e90ac"/><rect x="5" y="5" width="2" height="2" fill="#8e90ac"/><rect x="5" y="10" width="2" height="2" fill="#8e90ac"/></svg>
<div style="left:399px;top:547.3px;width:229.6px;height:29.6px;background:#2f3146;box-sizing:border-box;border:1px solid #a9a9b3;box-shadow:inset 0 0 0 1px #ececf0"></div>
<div style="left:400.0px;top:550px;width:20px;text-align:center;font:25px/1 'Liberation Serif','Noto Serif CJK SC',serif;color:#fff;transform:scaleX(1.12)">0</div>
<div style="left:413.5px;top:550px;width:20px;text-align:center;font:25px/1 'Liberation Serif','Noto Serif CJK SC',serif;color:#fff;transform:scaleX(1.12)">0</div>
<div style="left:472.5px;top:550px;width:20px;text-align:center;font:25px/1 'Liberation Serif','Noto Serif CJK SC',serif;color:#fff;transform:scaleX(1.12)">0</div>
<div style="left:486.0px;top:550px;width:20px;text-align:center;font:25px/1 'Liberation Serif','Noto Serif CJK SC',serif;color:#fff;transform:scaleX(1.12)">0</div>
<div style="left:546.0px;top:550px;width:20px;text-align:center;font:25px/1 'Liberation Serif','Noto Serif CJK SC',serif;color:#fff;transform:scaleX(1.12)">0</div>
<div style="left:559.5px;top:550px;width:20px;text-align:center;font:25px/1 'Liberation Serif','Noto Serif CJK SC',serif;color:#fff;transform:scaleX(1.12)">4</div>
<div style="left:442.5px;top:553px;font:21px/1 'Liberation Serif','Noto Serif CJK SC',serif;color:#fff">时</div>
<div style="left:516.5px;top:553px;font:21px/1 'Liberation Serif','Noto Serif CJK SC',serif;color:#fff">分</div>
<div style="left:588.5px;top:553px;font:21px/1 'Liberation Serif','Noto Serif CJK SC',serif;color:#fff">秒</div>
<svg style="left:614px;top:558px" width="12" height="8" viewBox="0 0 12 8"><path d="M1 1 H11 L6 7 Z" fill="#fff"/></svg>
<div style="left:632px;top:531px;width:1px;height:63px;background:#e2e2e8;"></div>
<div style="left:635px;top:531px;width:1px;height:63px;background:#e2e2e8;"></div>
<svg style="left:638px;top:555px" width="7" height="12"><rect x="0" y="0" width="2" height="2" fill="#8e90ac"/><rect x="0" y="5" width="2" height="2" fill="#8e90ac"/><rect x="0" y="10" width="2" height="2" fill="#8e90ac"/><rect x="5" y="0" width="2" height="2" fill="#8e90ac"/><rect x="5" y="5" width="2" height="2" fill="#8e90ac"/><rect x="5" y="10" width="2" height="2" fill="#8e90ac"/></svg>
<div style="left:653px;top:537.5px;font:12px/1 'Liberation Sans','Noto Sans CJK SC',sans-serif;color:#111;white-space:pre;">选区</div>
<div style="left:654px;top:560px;width:23px;height:23px;background:#dcdde4;border-radius:3px"></div>
<svg style="left:654px;top:560px" width="23" height="23" viewBox="0 0 23 23"><g transform="translate(11.3,11.3) scale(0.97)"><g fill="none" stroke="#111" stroke-width="1.15" stroke-linejoin="round"><path d="M-1.58 -4.85 L-1.55 -6.62 L1.55 -6.62 L1.58 -4.85 L3.41 -3.79 L4.96 -4.65 L6.51 -1.97 L4.99 -1.06 L4.99 1.06 L6.51 1.97 L4.96 4.65 L3.41 3.79 L1.58 4.85 L1.55 6.62 L-1.55 6.62 L-1.58 4.85 L-3.41 3.79 L-4.96 4.65 L-6.51 1.97 L-4.99 1.06 L-4.99 -1.06 L-6.51 -1.97 L-4.96 -4.65 L-3.41 -3.79 Z"/><circle cx="0" cy="0" r="2.2"/></g></g></svg>
<div style="left:683.6px;top:536.2px;width:213.4px;height:22.6px;background:#2f3146;box-sizing:border-box;border:1px solid #a9a9b3;box-shadow:inset 0 0 0 1px #ececf0"></div>
<div style="left:682.0px;top:540.0px;width:20px;text-align:center;font:17px/1 'Liberation Serif','Noto Serif CJK SC',serif;color:#fff;transform:scaleX(1.0)">0</div>
<div style="left:692.05px;top:540.0px;width:20px;text-align:center;font:17px/1 'Liberation Serif','Noto Serif CJK SC',serif;color:#fff;transform:scaleX(1.0)">0</div>
<div style="left:735.0px;top:540.0px;width:20px;text-align:center;font:17px/1 'Liberation Serif','Noto Serif CJK SC',serif;color:#fff;transform:scaleX(1.0)">0</div>
<div style="left:745.05px;top:540.0px;width:20px;text-align:center;font:17px/1 'Liberation Serif','Noto Serif CJK SC',serif;color:#fff;transform:scaleX(1.0)">0</div>
<div style="left:788.0px;top:540.0px;width:20px;text-align:center;font:17px/1 'Liberation Serif','Noto Serif CJK SC',serif;color:#fff;transform:scaleX(1.0)">0</div>
<div style="left:798.05px;top:540.0px;width:20px;text-align:center;font:17px/1 'Liberation Serif','Noto Serif CJK SC',serif;color:#fff;transform:scaleX(1.0)">0</div>
<div style="left:808.1px;top:540.0px;width:20px;text-align:center;font:17px/1 'Liberation Serif','Noto Serif CJK SC',serif;color:#fff;transform:scaleX(1.0)">.</div>
<div style="left:818.15px;top:540.0px;width:20px;text-align:center;font:17px/1 'Liberation Serif','Noto Serif CJK SC',serif;color:#fff;transform:scaleX(1.0)">0</div>
<div style="left:828.2px;top:540.0px;width:20px;text-align:center;font:17px/1 'Liberation Serif','Noto Serif CJK SC',serif;color:#fff;transform:scaleX(1.0)">0</div>
<div style="left:838.25px;top:540.0px;width:20px;text-align:center;font:17px/1 'Liberation Serif','Noto Serif CJK SC',serif;color:#fff;transform:scaleX(1.0)">0</div>
<div style="left:715.3px;top:541.0px;font:15px/1 'Liberation Serif','Noto Serif CJK SC',serif;color:#fff">时</div>
<div style="left:768px;top:541.0px;font:15px/1 'Liberation Serif','Noto Serif CJK SC',serif;color:#fff">分</div>
<div style="left:863.5px;top:541.0px;font:15px/1 'Liberation Serif','Noto Serif CJK SC',serif;color:#fff">秒</div>
<svg style="left:882.5px;top:544.0px" width="12" height="8" viewBox="0 0 12 8"><path d="M1 1 H11 L6 6.5 Z" fill="#fff"/></svg>
<div style="left:683.6px;top:560.2px;width:213.4px;height:22.6px;background:#2f3146;box-sizing:border-box;border:1px solid #a9a9b3;box-shadow:inset 0 0 0 1px #ececf0"></div>
<div style="left:682.0px;top:564.0px;width:20px;text-align:center;font:17px/1 'Liberation Serif','Noto Serif CJK SC',serif;color:#fff;transform:scaleX(1.0)">0</div>
<div style="left:692.05px;top:564.0px;width:20px;text-align:center;font:17px/1 'Liberation Serif','Noto Serif CJK SC',serif;color:#fff;transform:scaleX(1.0)">0</div>
<div style="left:735.0px;top:564.0px;width:20px;text-align:center;font:17px/1 'Liberation Serif','Noto Serif CJK SC',serif;color:#fff;transform:scaleX(1.0)">0</div>
<div style="left:745.05px;top:564.0px;width:20px;text-align:center;font:17px/1 'Liberation Serif','Noto Serif CJK SC',serif;color:#fff;transform:scaleX(1.0)">0</div>
<div style="left:788.0px;top:564.0px;width:20px;text-align:center;font:17px/1 'Liberation Serif','Noto Serif CJK SC',serif;color:#fff;transform:scaleX(1.0)">0</div>
<div style="left:798.05px;top:564.0px;width:20px;text-align:center;font:17px/1 'Liberation Serif','Noto Serif CJK SC',serif;color:#fff;transform:scaleX(1.0)">0</div>
<div style="left:808.1px;top:564.0px;width:20px;text-align:center;font:17px/1 'Liberation Serif','Noto Serif CJK SC',serif;color:#fff;transform:scaleX(1.0)">.</div>
<div style="left:818.15px;top:564.0px;width:20px;text-align:center;font:17px/1 'Liberation Serif','Noto Serif CJK SC',serif;color:#fff;transform:scaleX(1.0)">0</div>
<div style="left:828.2px;top:564.0px;width:20px;text-align:center;font:17px/1 'Liberation Serif','Noto Serif CJK SC',serif;color:#fff;transform:scaleX(1.0)">0</div>
<div style="left:838.25px;top:564.0px;width:20px;text-align:center;font:17px/1 'Liberation Serif','Noto Serif CJK SC',serif;color:#fff;transform:scaleX(1.0)">0</div>
<div style="left:715.3px;top:565.0px;font:15px/1 'Liberation Serif','Noto Serif CJK SC',serif;color:#fff">时</div>
<div style="left:768px;top:565.0px;font:15px/1 'Liberation Serif','Noto Serif CJK SC',serif;color:#fff">分</div>
<div style="left:863.5px;top:565.0px;font:15px/1 'Liberation Serif','Noto Serif CJK SC',serif;color:#fff">秒</div>
<svg style="left:882.5px;top:568.0px" width="12" height="8" viewBox="0 0 12 8"><path d="M1 1 H11 L6 6.5 Z" fill="#fff"/></svg>
<svg style="left:4px;top:603px" width="7" height="12"><rect x="0" y="0" width="2" height="2" fill="#8e90ac"/><rect x="0" y="5" width="2" height="2" fill="#8e90ac"/><rect x="0" y="10" width="2" height="2" fill="#8e90ac"/><rect x="5" y="0" width="2" height="2" fill="#8e90ac"/><rect x="5" y="5" width="2" height="2" fill="#8e90ac"/><rect x="5" y="10" width="2" height="2" fill="#8e90ac"/></svg>
<div style="left:13px;top:597px;width:27px;height:27px;background:#dcdde4;border-radius:3px"></div>
<svg style="left:13px;top:597px" width="27" height="27" viewBox="0 0 27 27"><rect x="6.5" y="7" width="4" height="13.5" rx="1" fill="#a9bfca"/><path d="M14 10 L20.3 13.7 L14 17.4 Z" fill="#a9bfca"/></svg>
<div style="left:45px;top:613.7px;width:138px;height:2px;background:#c3d1e2;"></div>
<div style="left:45.0px;top:609px;width:1px;height:5px;background:#c3d1e2;"></div>
<div style="left:54.8px;top:611.5px;width:1px;height:2.5px;background:#c3d1e2;"></div>
<div style="left:64.6px;top:611.5px;width:1px;height:2.5px;background:#c3d1e2;"></div>
<div style="left:74.4px;top:611.5px;width:1px;height:2.5px;background:#c3d1e2;"></div>
<div style="left:84.2px;top:611.5px;width:1px;height:2.5px;background:#c3d1e2;"></div>
<div style="left:94.0px;top:611.5px;width:1px;height:2.5px;background:#c3d1e2;"></div>
<div style="left:103.80000000000001px;top:611.5px;width:1px;height:2.5px;background:#c3d1e2;"></div>
<div style="left:113.60000000000001px;top:611.5px;width:1px;height:2.5px;background:#c3d1e2;"></div>
<div style="left:123.4px;top:611.5px;width:1px;height:2.5px;background:#c3d1e2;"></div>
<div style="left:133.2px;top:611.5px;width:1px;height:2.5px;background:#c3d1e2;"></div>
<div style="left:143.0px;top:611.5px;width:1px;height:2.5px;background:#c3d1e2;"></div>
<div style="left:152.8px;top:611.5px;width:1px;height:2.5px;background:#c3d1e2;"></div>
<div style="left:162.60000000000002px;top:611.5px;width:1px;height:2.5px;background:#c3d1e2;"></div>
<div style="left:172.4px;top:611.5px;width:1px;height:2.5px;background:#c3d1e2;"></div>
<div style="left:182.20000000000002px;top:609px;width:1px;height:5px;background:#c3d1e2;"></div>
<div style="left:84.5px;top:607.7px;width:12px;height:12px;border-radius:50%;background:#fff;box-sizing:border-box;border:1.3px solid #111"></div>
<div style="left:45px;top:604px;width:5px;height:1.3px;background:#111;"></div>
<div style="left:175px;top:604px;width:5px;height:1.3px;background:#111;"></div>
<div style="left:177px;top:602px;width:1.3px;height:5px;background:#111;"></div>
<div style="left:189px;top:595px;width:1px;height:32px;background:#e2e2e8;"></div>
<div style="left:192px;top:595px;width:1px;height:32px;background:#e2e2e8;"></div>
<div style="left:0px;top:628px;width:920px;height:24px;background:#f0f0f2;"></div>
<div style="left:10px;top:630px;width:1px;height:21px;background:#d0d0d4;"></div>
<div style="left:186px;top:630px;width:1px;height:21px;background:#d0d0d4;"></div>
<div style="left:729px;top:630px;width:1px;height:21px;background:#d0d0d4;"></div>
<div style="left:15px;top:635px;font:12px/1 'Liberation Sans','Noto Sans CJK SC',sans-serif;color:#111;white-space:pre;">录音.</div>
<div style="left:734.5px;top:635px;font:12px/1 'Liberation Sans','Noto Sans CJK SC',sans-serif;color:#111;white-space:pre;">实际采样率:</div>
<div style="left:810.5px;top:635px;font:12px/1 'Liberation Sans','Noto Sans CJK SC',sans-serif;color:#111;white-space:pre;">44100</div>
<div style="left:914px;top:646px;width:2px;height:2px;background:#b8b8b8;"></div>
<div style="left:911px;top:646px;width:2px;height:2px;background:#b8b8b8;"></div>
<div style="left:914px;top:643px;width:2px;height:2px;background:#b8b8b8;"></div>
<div style="left:908px;top:646px;width:2px;height:2px;background:#b8b8b8;"></div>
<div style="left:914px;top:640px;width:2px;height:2px;background:#b8b8b8;"></div>
<div style="left:911px;top:643px;width:2px;height:2px;background:#b8b8b8;"></div>
<div style="left:0px;top:0px;width:920px;height:1px;background:#8a8a8a;"></div>
<div style="left:0px;top:0px;width:1px;height:653px;background:#8a8a8a;"></div>
<div style="left:919px;top:50px;width:1px;height:603px;background:#444;"></div>
<div style="left:0px;top:651.3px;width:920px;height:2px;background:#3a3a3a;"></div>
</div></body></html>
